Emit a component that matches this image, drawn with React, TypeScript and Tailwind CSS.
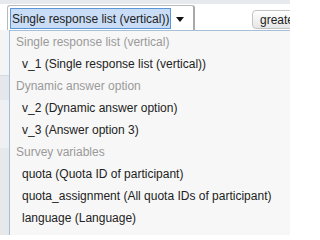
import React from "react";

type Row = { label: string; header?: boolean };

const rows: Row[] = [
  { label: "Single response list (vertical)", header: true },
  { label: "v_1 (Single response list (vertical))" },
  { label: "Dynamic answer option", header: true },
  { label: "v_2 (Dynamic answer option)" },
  { label: "v_3 (Answer option 3)" },
  { label: "Survey variables", header: true },
  { label: "quota (Quota ID of participant)" },
  { label: "quota_assignment (All quota IDs of participant)" },
  { label: "language (Language)" },
  { label: "respondent (Respondent identification)" },
];

export default function App() {
  return (
    <div className="w-[290px] h-[235px] overflow-hidden bg-[#e9ecef] text-[12px] text-[#222] font-['Liberation_Sans',Arial,sans-serif]">
      <div className="h-[4px] bg-[#e6eaee]" />

      {/* toolbar band with the combobox */}
      <div className="h-[26px] bg-white flex items-start">
        <div className="ml-[7px] mt-[1px] w-[188px] h-[25px] flex items-stretch border border-[#b9b9b9] border-r-2 border-r-[#a9a9a9] border-b-0 rounded-t-[3px] bg-white">
          <div className="mt-[2px] ml-[2px] mb-[1px] w-[161px] flex items-center border border-[#5b97d6] bg-[#c9ddf6] pl-[1px] whitespace-nowrap overflow-hidden leading-none">
            Single response list (vertical))
          </div>
          <div className="flex-1 flex items-center justify-center pt-[2px] pr-[4px]">
            <svg width="8" height="5" viewBox="0 0 8 5">
              <path d="M0 0 H8 L4 5 Z" fill="#111" />
            </svg>
          </div>
        </div>
        <div className="ml-auto mt-[6px] -mr-[10px] w-[48px] h-[19px] rounded-[4px] border border-[#c4c4c4] bg-gradient-to-b from-white to-[#e6e6e6] pl-[7px] flex items-center whitespace-nowrap">
          greater
        </div>
      </div>

      <div className="flex h-[205px]">
        {/* table rows behind the list */}
        <div className="w-[9px] flex flex-col">
          <div className="h-[45px] bg-[#f3f4f6]" />
          <div className="h-[1px] bg-[#d6dbe0]" />
          <div className="h-[24px] bg-[#e4e8ec]" />
          <div className="h-[48px] bg-[#eef0f3]" />
          <div className="flex-1 bg-[#e6e9ec]" />
        </div>

        <div className="flex-1 bg-[#f7f7f7] border-l border-t border-[#a7bfd6] flex flex-col">
          {rows.map((r) => (
            <div
              key={r.label}
              className={`h-[22px] shrink-0 flex items-center whitespace-nowrap ${
                r.header ? "pl-[6px] text-[#9a9a9a]" : "pl-[12px] text-[#222]"
              }`}
            >
              {r.label}
            </div>
          ))}
        </div>
      </div>
    </div>
  );
}
